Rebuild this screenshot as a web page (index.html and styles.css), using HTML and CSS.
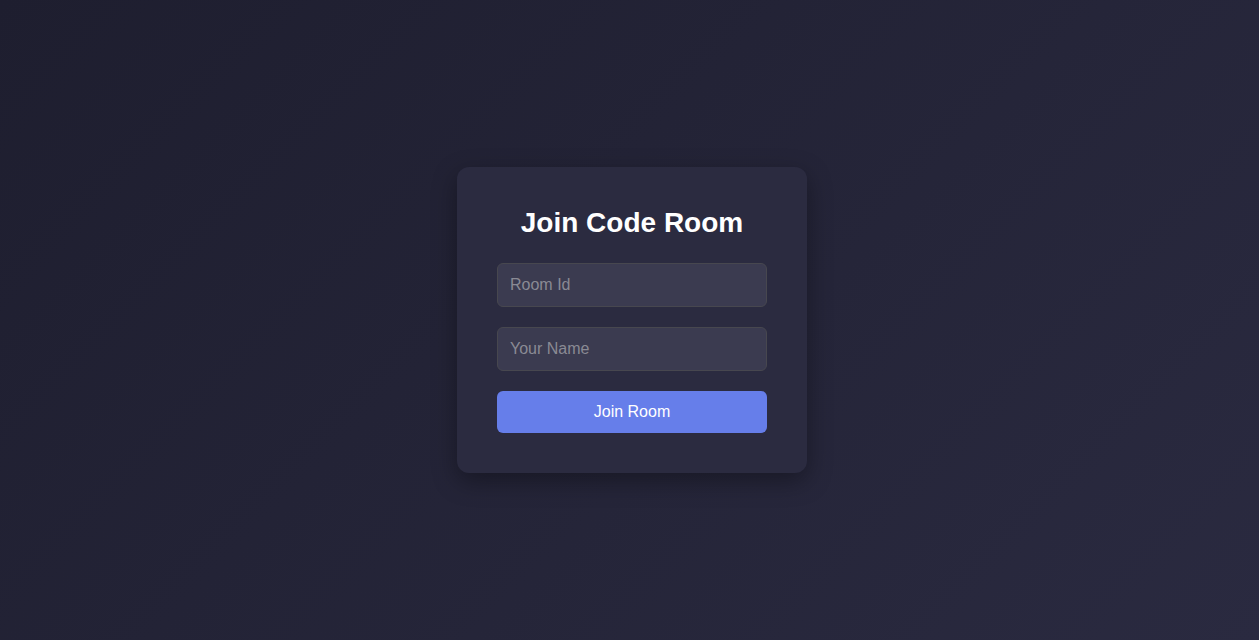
FILE: index.html
```html
<!DOCTYPE html>
<html lang="en">
<head>
<meta charset="utf-8">
<title>Join Code Room</title>
<link rel="stylesheet" href="styles.css">
</head>
<body>
<main class="page">
  <form class="card">
    <h2 class="title">Join Code Room</h2>
    <input class="field" type="text" placeholder="Room Id">
    <input class="field" type="text" placeholder="Your Name">
    <button class="btn" type="button">Join Room</button>
  </form>
</main>
</body>
</html>
```

FILE: styles.css
```css
* { box-sizing: border-box; }
html, body { margin: 0; height: 100%; }
body {
  background: linear-gradient(135deg, #1e1e2f 0%, #2a2a40 100%);
  font-family: "Liberation Sans", Arial, sans-serif;
  color: #fff;
}
.page {
  height: 100%;
  display: flex;
  align-items: center;
  justify-content: center;
  padding-left: 5px;
}
.card {
  width: 350px;
  padding: 40px;
  background: #2b2b40;
  border-radius: 12px;
  box-shadow: 0 8px 24px rgba(0, 0, 0, 0.35);
  display: flex;
  flex-direction: column;
  gap: 20px;
}
.title {
  margin: 0 0 4px;
  font-size: 28px;
  line-height: 32px;
  font-weight: bold;
  text-align: center;
  color: #fff;
}
.field {
  width: 100%;
  padding: 12px;
  font-family: inherit;
  font-size: 16px;
  line-height: 18px;
  color: #fff;
  background: #3b3b50;
  border: 1px solid #47474f;
  border-radius: 6px;
  outline: none;
}
.field::placeholder { color: #8a8a94; }
.btn {
  width: 100%;
  padding: 12px;
  font-family: inherit;
  font-size: 16px;
  line-height: 18px;
  color: #fff;
  background: #667eea;
  border: none;
  border-radius: 6px;
  cursor: pointer;
}
```
